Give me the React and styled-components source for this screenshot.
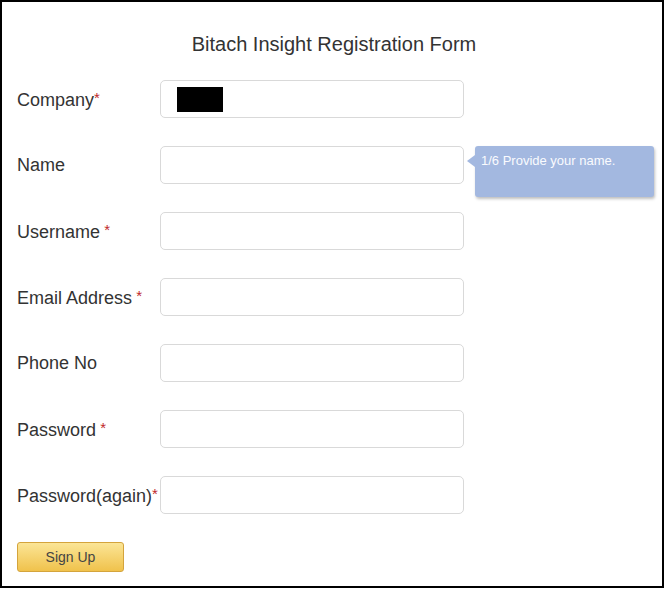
import React from "react";
import styled, { createGlobalStyle } from "styled-components";

const GlobalStyle = createGlobalStyle`
  html, body {
    margin: 0;
    padding: 0;
    background: #fff;
  }
  body {
    font-family: "Liberation Sans", Arial, sans-serif;
  }
`;

const fields = [
  { label: "Company", star: "*", value: true },
  { label: "Name", hint: "1/6 Provide your name." },
  { label: "Username", star: " *" },
  { label: "Email Address", star: " *" },
  { label: "Phone No" },
  { label: "Password", star: " *" },
  { label: "Password(again)", star: "*" },
];

function App() {
  return (
    <>
      <GlobalStyle />
      <Frame>
        <Title>Bitach Insight Registration Form</Title>
        <FormList>
          {fields.map((f) => (
            <Row key={f.label}>
              <Label>
                {f.label}
                {f.star && <Star>{f.star}</Star>}
              </Label>
              <InputBox>
                {f.value && <Redacted />}
                {f.hint && (
                  <Tooltip>
                    <Arrow />
                    {f.hint}
                  </Tooltip>
                )}
              </InputBox>
            </Row>
          ))}
        </FormList>
        <SignUp>Sign Up</SignUp>
      </Frame>
    </>
  );
}

export default App;

const Frame = styled.div`
  box-sizing: border-box;
  width: 664px;
  height: 588px;
  border: 2px solid #000;
  padding: 30px 0 0 15px;
  display: flex;
  flex-direction: column;
`;

const Title = styled.h1`
  margin: 0 0 24px;
  width: 634px;
  text-align: center;
  font-size: 20px;
  font-weight: normal;
  line-height: 24px;
  color: #333;
`;

const FormList = styled.div`
  display: flex;
  flex-direction: column;
  gap: 28px;
`;

const Row = styled.div`
  display: flex;
  align-items: center;
`;

const Label = styled.div`
  width: 143px;
  font-size: 18px;
  color: #333;
  white-space: nowrap;
  margin-top: 1px;
`;

const Star = styled.span`
  color: #c0282a;
  font-size: 15px;
  vertical-align: 3px;
`;

const InputBox = styled.div`
  position: relative;
  box-sizing: border-box;
  width: 304px;
  height: 38px;
  border: 1px solid #d9d9d9;
  border-radius: 5px;
  background: #fff;
`;

const Redacted = styled.div`
  position: absolute;
  left: 16px;
  top: 6px;
  width: 46px;
  height: 25px;
  background: #000;
`;

const Tooltip = styled.div`
  position: absolute;
  left: 314px;
  top: -1px;
  box-sizing: border-box;
  width: 179px;
  height: 51px;
  padding: 7px 6px;
  background: #a3b8e0;
  border-radius: 3px;
  box-shadow: 1px 2px 3px rgba(0, 0, 0, 0.25);
  color: #fafbfe;
  font-size: 13px;
  line-height: 15px;
  white-space: nowrap;
`;

const Arrow = styled.span`
  position: absolute;
  left: -8px;
  top: 9px;
  width: 0;
  height: 0;
  border-top: 6px solid transparent;
  border-bottom: 6px solid transparent;
  border-right: 8px solid #a3b8e0;
`;

const SignUp = styled.button`
  margin-top: 28px;
  width: 107px;
  height: 30px;
  padding: 0;
  border: 1px solid #d4a43c;
  border-radius: 3px;
  background: linear-gradient(#fbe596, #f0c24c);
  color: #444;
  font-family: "Liberation Sans", Arial, sans-serif;
  font-size: 14px;
`;
